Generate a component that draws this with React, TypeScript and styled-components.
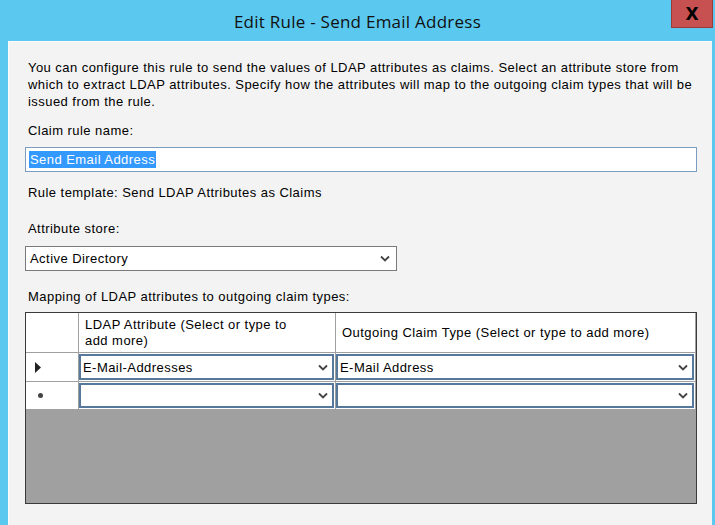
import styled, { createGlobalStyle } from "styled-components";

const GlobalStyle = createGlobalStyle`
  html, body {
    margin: 0;
    padding: 0;
    background: #5bc8ef;
  }
  * {
    box-sizing: border-box;
  }
`;

const Window = styled.div`
  width: 715px;
  height: 525px;
  background: #5bc8ef;
  display: flex;
  flex-direction: column;
  font-family: "Liberation Sans", Arial, sans-serif;
  color: #000;
  overflow: hidden;
`;

const TitleBar = styled.div`
  height: 41px;
  display: grid;
  grid-template-columns: 1fr auto 1fr;
  align-items: start;
`;

const Title = styled.div`
  grid-column: 2;
  padding-top: 10px;
  font-family: "Open Sans", "Noto Sans", sans-serif;
  font-size: 17px;
  letter-spacing: 0.25px;
  line-height: 24px;
  color: #111;
  white-space: nowrap;
`;

const CloseButton = styled.div`
  grid-column: 3;
  justify-self: end;
  margin-right: 2px;
  width: 42px;
  height: 28px;
  background: #c75050;
  border: 1px solid #9c3a3a;
  border-top: none;
  display: flex;
  align-items: center;
  justify-content: center;
  font-family: "DejaVu Sans", sans-serif;
  font-weight: bold;
  font-size: 17px;
  color: #000;
`;

const Body = styled.div`
  flex: 1;
  margin: 0 3px 0 8px;
  background: #f3f3f3;
  border-top: 1px solid #fbfbfb;
  border-left: 1px solid #fbfbfb;
  padding: 17px 16px 0 16px;
  font-size: 13px;
  letter-spacing: 0.45px;
  line-height: 17px;
`;

const Label = styled.div<{ $top: number }>`
  padding-left: 3px;
  margin-top: ${(p) => p.$top}px;
  white-space: nowrap;
`;

const Paragraph = styled.p`
  margin: 0;
  padding-left: 3px;
  white-space: nowrap;
`;

const TextBox = styled.div`
  margin-top: 8px;
  width: 672px;
  height: 25px;
  background: #fff;
  border: 1px solid #7a9cc0;
  display: flex;
  align-items: center;
  padding-left: 3px;
`;

const Selected = styled.span`
  background: #3399ff;
  color: #fff;
  line-height: 17px;
  padding: 0 1px;
`;

const ComboBox = styled.div`
  margin-top: 9px;
  width: 372px;
  height: 25px;
  background: #fff;
  border: 1px solid #7a7a7a;
  display: flex;
  align-items: center;
  justify-content: space-between;
  padding: 0 6px 0 4px;
`;

const Chevron = () => (
  <svg width="10" height="7" viewBox="0 0 10 7">
    <path d="M1 1.5 L5 5.5 L9 1.5" fill="none" stroke="#444" strokeWidth="1.8" />
  </svg>
);

const Grid = styled.div`
  margin-top: 7px;
  width: 672px;
  height: 192px;
  border: 1px solid #3a3a3a;
  background: #a0a0a0;
  display: grid;
  grid-template-columns: 53px 257px 360px;
  grid-template-rows: 40px 29px 28px;
  align-content: start;
`;

const HeaderCell = styled.div<{ $center?: boolean }>`
  background: #fff;
  border-right: 1px solid #a0a0a0;
  border-bottom: 1px solid #a0a0a0;
  padding: ${(p) => (p.$center ? "0 6px" : "4px 6px 0 6px")};
  line-height: 16px;
  display: flex;
  align-items: ${(p) => (p.$center ? "center" : "flex-start")};
  white-space: nowrap;
`;

const RowHeader = styled.div`
  background: #fff;
  border-right: 1px solid #a0a0a0;
  border-bottom: 1px solid #a0a0a0;
  display: flex;
  align-items: center;
  padding-left: 8px;
`;

const DataCell = styled.div`
  background: #fff;
  border-right: 1px solid #a0a0a0;
  border-bottom: 1px solid #a0a0a0;
  padding: 1px 1px 1px 0;
`;

const CellCombo = styled.div`
  height: 100%;
  border: 2px solid #56789b;
  display: flex;
  align-items: center;
  justify-content: space-between;
  padding: 0 4px 0 2px;
`;

const Arrow = () => (
  <svg width="8" height="11" viewBox="0 0 8 11">
    <path d="M1 0 L7 5.5 L1 11 Z" fill="#222" />
  </svg>
);

const Dot = styled.span`
  width: 5px;
  height: 5px;
  margin-left: 4px;
  border-radius: 50%;
  background: #444;
`;

const rows = [
  { marker: "current", ldap: "E-Mail-Addresses", claim: "E-Mail Address" },
  { marker: "new", ldap: "", claim: "" },
];

export default function App() {
  return (
    <>
      <GlobalStyle />
      <Window>
        <TitleBar>
          <Title>Edit Rule - Send Email Address</Title>
          <CloseButton>X</CloseButton>
        </TitleBar>
        <Body>
          <Paragraph>
            You can configure this rule to send the values of LDAP attributes as claims. Select an attribute store from
            <br />
            which to extract LDAP attributes. Specify how the attributes will map to the outgoing claim types that will be
            <br />
            issued from the rule.
          </Paragraph>
          <Label $top={12}>Claim rule name:</Label>
          <TextBox>
            <Selected>Send Email Address</Selected>
          </TextBox>
          <Label $top={12}>Rule template: Send LDAP Attributes as Claims</Label>
          <Label $top={19}>Attribute store:</Label>
          <ComboBox>
            <span>Active Directory</span>
            <Chevron />
          </ComboBox>
          <Label $top={17}>Mapping of LDAP attributes to outgoing claim types:</Label>
          <Grid>
            <HeaderCell />
            <HeaderCell>
              LDAP Attribute (Select or type to
              <br />
              add more)
            </HeaderCell>
            <HeaderCell $center>Outgoing Claim Type (Select or type to add more)</HeaderCell>
            {rows.map((r, i) => (
              <>
                <RowHeader key={"h" + i}>{r.marker === "current" ? <Arrow /> : <Dot />}</RowHeader>
                <DataCell key={"a" + i}>
                  <CellCombo>
                    <span>{r.ldap}</span>
                    <Chevron />
                  </CellCombo>
                </DataCell>
                <DataCell key={"b" + i}>
                  <CellCombo>
                    <span>{r.claim}</span>
                    <Chevron />
                  </CellCombo>
                </DataCell>
              </>
            ))}
          </Grid>
        </Body>
      </Window>
    </>
  );
}
